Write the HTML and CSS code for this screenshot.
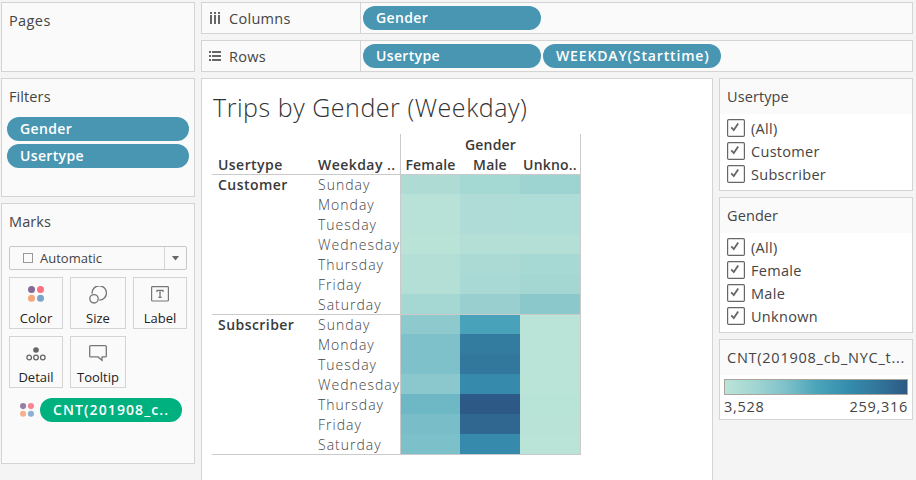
FILE: index.html
```html
<!DOCTYPE html>
<html lang="en">
<head>
<meta charset="utf-8">
<title>Trips by Gender (Weekday)</title>
<link rel="stylesheet" href="styles.css">
</head>
<body>
<svg class="defs" width="0" height="0">
  <symbol id="dots" viewBox="0 0 16 16"><circle cx="3.5" cy="3.5" r="3.5" fill="#866a96"/><circle cx="12.5" cy="3.5" r="3.5" fill="#fb7180"/><circle cx="3.5" cy="12.3" r="3.5" fill="#f5a57a"/><circle cx="12.5" cy="12.3" r="3.5" fill="#7ba4cd"/></symbol>
  <symbol id="check" viewBox="0 0 18 18"><rect x=".6" y=".6" width="16.8" height="16.8" rx="1.2" fill="#fff" stroke="#666" stroke-width="1.2"/><path d="M4.2 8.4 L6.8 11.1 L11.2 4.6" fill="none" stroke="#666" stroke-width="1.8"/></symbol>
</svg>
<div class="app">
  <aside class="left">
    <section class="panel pages"><h2>Pages</h2></section>
    <section class="panel filters"><h2>Filters</h2>
      <div class="pill">Gender</div>
      <div class="pill">Usertype</div>
    </section>
    <section class="panel marks"><h2>Marks</h2>
      <div class="select"><span class="square"></span><span class="value">Automatic</span><span class="arrow"><svg width="7" height="5"><path d="M0 0H7L3.5 4.5Z" fill="#666"/></svg></span></div>
      <div class="buttons">
        <div class="button"><svg width="16" height="16"><use href="#dots"/></svg><span>Color</span></div>
        <div class="button"><svg width="18" height="18" fill="none" stroke="#777" stroke-width="1.3"><path d="M3.1 7.6A7.2 7.2 0 1 1 10.2 14.2"/><circle cx="5" cy="12.8" r="4.2"/></svg><span>Size</span></div>
        <div class="button"><svg width="18" height="16" fill="none" stroke="#777"><rect x=".6" y=".6" width="16.8" height="14.4" rx=".8" stroke-width="1.2"/><path d="M6 6V4.3H12V6M9 4.3V11.2M7.3 11.4H10.7" stroke-width="1.3"/></svg><span>Label</span></div>
        <div class="button"><svg class="low" width="20" height="14" fill="none" stroke="#666" stroke-width="1.3"><circle cx="10" cy="3" r="2.8" fill="#666" stroke="none"/><circle cx="3.2" cy="10.5" r="2.3"/><circle cx="10" cy="10.5" r="2.3"/><circle cx="16.8" cy="10.5" r="2.3"/></svg><span>Detail</span></div>
        <div class="button"><svg width="18" height="17" fill="none" stroke="#777" stroke-width="1.3"><path d="M1.6 .7H16.4Q17.3 .7 17.3 1.6V11Q17.3 11.9 16.4 11.9H13V15.3L9 11.9H1.6Q.7 11.9 .7 11V1.6Q.7 .7 1.6 .7Z"/></svg><span>Tooltip</span></div>
      </div>
      <div class="encoding"><svg width="14" height="14" opacity=".85"><use href="#dots"/></svg><div class="pill green">CNT(201908_c..</div></div>
    </section>
  </aside>
  <div class="main">
    <div class="shelf"><div class="name"><svg width="14" height="14" fill="#666"><path d="M2 1h2v2h-2zM6 1h2v2h-2zM10 1h2v2h-2zM2 4h2v9h-2zM6 4h2v9h-2zM10 4h2v9h-2z"/></svg><span>Columns</span></div><div class="pill">Gender</div></div>
    <div class="shelf"><div class="name"><svg width="14" height="14" fill="#666"><path d="M1 2h2v2h-2zM1 6h2v2h-2zM1 10h2v2h-2zM4 2h9v2h-9zM4 6h9v2h-9zM4 10h9v2h-9z"/></svg><span>Rows</span></div><div class="pill">Usertype</div><div class="pill weekday">WEEKDAY(Starttime)</div></div>
    <div class="work">
      <main class="sheet"><h1>Trips by Gender (Weekday)</h1>
        <table>
          <colgroup><col class="c-type"><col class="c-day"><col class="c-val"><col class="c-val"><col class="c-last"></colgroup>
          <thead>
            <tr><th></th><th></th><th colspan="3" class="first last center">Gender</th></tr>
            <tr><th>Usertype</th><th>Weekday ..</th><th class="first center">Female</th><th class="center">Male</th><th class="last center">Unkno..</th></tr>
          </thead>
          <tbody id="data"></tbody>
        </table>
      </main>
      <aside class="right">
        <section class="card users"><h2>Usertype</h2><ul>
          <li><svg><use href="#check"/></svg><span>(All)</span></li><li><svg><use href="#check"/></svg><span>Customer</span></li><li><svg><use href="#check"/></svg><span>Subscriber</span></li></ul></section>
        <section class="card genders"><h2>Gender</h2><ul>
          <li><svg><use href="#check"/></svg><span>(All)</span></li><li><svg><use href="#check"/></svg><span>Female</span></li><li><svg><use href="#check"/></svg><span>Male</span></li><li><svg><use href="#check"/></svg><span>Unknown</span></li></ul></section>
        <section class="card legend"><h2>CNT(201908_cb_NYC_t...</h2><div class="ramp"></div><div class="range"><span>3,528</span><span>259,316</span></div></section>
      </aside>
    </div>
  </div>
</div>
<script src="chart.js"></script>
</body>
</html>
```
FILE: styles.css
```css
* { box-sizing: border-box; }
body { margin: 0; height: 480px; overflow: hidden; background: #f4f4f4; color: #444; font: 14.5px/20px "Open Sans", sans-serif; }
h1, h2, ul { margin: 0; padding: 0; font-weight: 400; list-style: none; }
.defs { display: block; }
.app { display: flex; gap: 6px; padding: 2px 3px 0 1px; height: 480px; }
.left, .right { width: 194px; display: flex; flex-direction: column; gap: 6px; flex: none; }
.panel, .card, .shelf { border: 1px solid #d4d4d4; background: #fafafa; flex: none; }
h2 { font-size: 14.5px; line-height: 20px; letter-spacing: .1px; white-space: nowrap; }
.panel h2 { padding: 8px 7px 0; }
.pages { height: 70px; }
.pages h2 { letter-spacing: .4px; }
.filters { height: 119px; }
.filters .pill { width: 182px; margin: 0 0 3px 5px; }
.filters h2 { margin-bottom: 10px; }
.marks { height: 261px; }
.pill { height: 24px; width: 178px; border-radius: 12px; background: #4996b2; color: #fff; padding: 0 13px; font-size: 14px; line-height: 24px; font-weight: 600; letter-spacing: .35px; white-space: nowrap; }
.weekday { letter-spacing: .85px; }
.select { width: 178px; height: 24px; margin: 14px 0 7px 7px; border: 1px solid #c8c8c8; border-radius: 2px; display: flex; align-items: center; }
.square { width: 10px; height: 10px; border: 1px solid #999; margin: 0 7px 0 13px; }
.value { flex: 1; font-size: 13px; }
.arrow { width: 22px; height: 22px; border-left: 1px solid #d4d4d4; display: flex; align-items: center; justify-content: center; }
.buttons { display: grid; grid-template-columns: 54px 56px 54px; gap: 7px; margin-left: 7px; }
.button { height: 52px; border: 1px solid #d4d4d4; display: flex; flex-direction: column; align-items: center; justify-content: space-between; padding: 8px 0 0; color: #222; font-size: 13px; }
.button svg { flex: none; }
.low { margin-top: 2px; }
.encoding { display: flex; align-items: center; gap: 6px; margin: 10px 0 0 18px; }
.green { width: 142px; background: #00b180; letter-spacing: 1.1px; }
.main { width: 712px; display: flex; flex-direction: column; gap: 6px; }
.shelf { height: 32px; display: flex; align-items: center; gap: 2px; }
.name { width: 159px; height: 30px; border-right: 1px solid #d4d4d4; display: flex; align-items: center; padding-left: 6px; gap: 7px; letter-spacing: .3px; }
.name span { padding-top: 1px; }
.work { display: flex; gap: 6px; height: 402px; }
.sheet { width: 512px; background: #fff; border: 1px solid #d4d4d4; border-bottom: 0; padding: 13px 0 0 10px; }
h1 { padding-left: 1px; font-size: 25px; line-height: 31px; height: 42px; font-weight: 300; letter-spacing: .54px; color: #333; white-space: nowrap; }
table { width: 369px; table-layout: fixed; border-collapse: separate; border-spacing: 0; }
.c-type { width: 100px; }
.c-day { width: 88px; }
.c-val { width: 60px; }
.c-last { width: 61px; }
tr { height: 20px; }
th, td { height: 20px; padding: 0 0 0 6px; text-align: left; line-height: 19px; white-space: nowrap; font-size: 14px; }
th { font-weight: 600; color: #3a3a3a; letter-spacing: .45px; }
thead .center { letter-spacing: .2px; }
td { color: #444; font-weight: 300; letter-spacing: 1px; }
.center { text-align: center; padding: 0; }
.first { border-left: 1px solid #cacaca; }
.last { border-right: 1px solid #cacaca; }
.group > * { border-top: 1px solid #cacaca; line-height: 18px; }
.end > * { border-bottom: 1px solid #cacaca; height: 21px; }
.right h2 { height: 35px; padding: 8px 7px 0; background: #fafafa; }
.right .legend h2 { letter-spacing: .75px; }
.card { background: #fff; }
.users { height: 113px; }
.genders { height: 136px; }
.legend { height: 81px; }
.card ul { padding: 2px 0 0 7px; }
li { height: 23px; display: flex; align-items: flex-start; gap: 6px; letter-spacing: .3px; line-height: 25px; }
li svg { width: 18px; height: 18px; margin-top: 3px; }
.ramp { height: 16px; margin: 4px 4px 0; border: 1px solid #aaa49c; background: linear-gradient(90deg, #bce4d8, #a1d5d2, #7ec1ca, #4ba5ba, #358ead, #32779b, #2c5985); }
.range { display: flex; justify-content: space-between; padding: 2px 4px 0 4px; letter-spacing: .7px; }
```
FILE: chart.js
```js
const days = ["Sunday", "Monday", "Tuesday", "Wednesday", "Thursday", "Friday", "Saturday"];
const groups = [
  ["Customer", [
    ["#aedcd5", "#a4d8d3", "#9dd4d1"], ["#b8e2d7", "#afdcd6", "#aedcd6"], ["#b8e2d7", "#afdcd6", "#aedcd6"],
    ["#b9e3d7", "#b3dfd6", "#b3dfd6"], ["#b4dfd6", "#abdad4", "#a7d9d4"], ["#b3dfd6", "#a8d9d4", "#a4d7d2"],
    ["#a5d8d3", "#99d0cf", "#8ac8cc"]]],
  ["Subscriber", [
    ["#8dc9cd", "#47a2ba", "#bbe4d8"], ["#7fc1ca", "#337ca0", "#bae4d7"], ["#7fc1ca", "#32789c", "#bae4d7"],
    ["#8bc8cd", "#368aab", "#bae4d7"], ["#6eb7c5", "#2c5985", "#b8e3d7"], ["#78bdc8", "#2f6790", "#b9e3d7"],
    ["#7cc0ca", "#368aab", "#bae4d7"]]]
];
const body = document.getElementById("data");
groups.forEach(([name, rows], g) => rows.forEach((colors, i) => {
  const tr = document.createElement("tr");
  if (i === 0) tr.className = "group";
  if (g === 1 && i === 6) tr.className = "end";
  tr.innerHTML = `<th>${i === 0 ? name : ""}</th><td>${days[i]}</td>` +
    colors.map((c, n) => `<td class="${n === 0 ? "first" : n === 2 ? "last" : ""}" style="background:${c}"></td>`).join("");
  body.appendChild(tr);
}));
```
